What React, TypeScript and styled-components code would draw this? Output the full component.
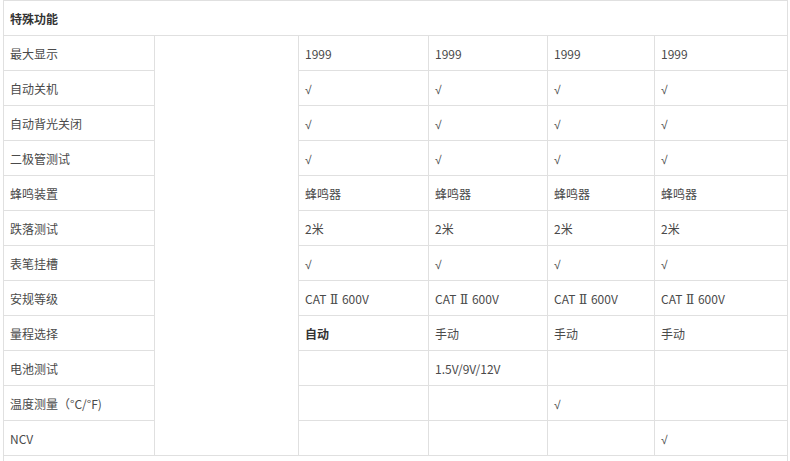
import React from "react";
import styled, { createGlobalStyle } from "styled-components";

const Global = createGlobalStyle`
  html, body { margin: 0; padding: 0; background: #fff; }
  body { font-family: "Noto Sans CJK SC", "Noto Sans", sans-serif; overflow: hidden; }
`;

const Page = styled.div`
  padding: 0 3px;
`;

const Table = styled.table`
  width: 784px;
  border-collapse: collapse;
  table-layout: fixed;
  font-size: 12px;
  color: #4a4a4a;
`;

const Cell = styled.td<{ $bold?: boolean }>`
  border: 1px solid #e0e0e0;
  height: 34px;
  padding: 0 0 0 6px;
  vertical-align: middle;
  font-weight: ${(p) => (p.$bold ? 700 : 400)};
  color: ${(p) => (p.$bold ? "#333" : "#4a4a4a")};
  white-space: nowrap;
`;

const Check = styled.span`
  font-family: "Liberation Sans", sans-serif;
  font-size: 12px;
`;

const Roman = styled.span`
  font-family: "DejaVu Serif", serif;
  font-size: 12px;
  margin: 0 1px;
`;

const EdgeCell = styled.td`
  border: 1px solid #e0e0e0;
  border-top: none;
  height: 0;
  padding: 0;
  font-size: 0;
  line-height: 0;
`;

const SectionCell = styled.td`
  border: 1px solid #e0e0e0;
  height: 34px;
  padding: 0 0 0 6px;
  font-weight: 700;
  color: #333;
`;

const widths = [151, 144, 130, 119, 107, 133];

type Row = { label: string; values: string[]; bold?: number[] };

const rows: Row[] = [
  { label: "最大显示", values: ["1999", "1999", "1999", "1999"] },
  { label: "自动关机", values: ["√", "√", "√", "√"] },
  { label: "自动背光关闭", values: ["√", "√", "√", "√"] },
  { label: "二极管测试", values: ["√", "√", "√", "√"] },
  { label: "蜂鸣装置", values: ["蜂鸣器", "蜂鸣器", "蜂鸣器", "蜂鸣器"] },
  { label: "跌落测试", values: ["2米", "2米", "2米", "2米"] },
  { label: "表笔挂槽", values: ["√", "√", "√", "√"] },
  { label: "安规等级", values: ["CAT Ⅱ 600V", "CAT Ⅱ 600V", "CAT Ⅱ 600V", "CAT Ⅱ 600V"] },
  { label: "量程选择", values: ["自动", "手动", "手动", "手动"], bold: [0] },
  { label: "电池测试", values: ["", "1.5V/9V/12V", "", ""] },
  { label: "温度测量（°C/°F)", values: ["", "", "√", ""] },
  { label: "NCV", values: ["", "", "", "√"] },
];

function renderValue(v: string) {
  if (v === "√") return <Check>√</Check>;
  if (v.includes("Ⅱ")) {
    const [a, b] = v.split("Ⅱ");
    return (
      <>
        {a}
        <Roman>Ⅱ</Roman>
        {b}
      </>
    );
  }
  return v;
}

export default function App() {
  return (
    <Page>
      <Global />
      <Table>
        <colgroup>
          {widths.map((w, i) => (
            <col key={i} style={{ width: w }} />
          ))}
        </colgroup>
        <tbody>
          <tr>
            {widths.map((_, i) => (
              <EdgeCell key={i} />
            ))}
          </tr>
          <tr>
            <SectionCell colSpan={6}>特殊功能</SectionCell>
          </tr>
          {rows.map((r, i) => (
            <tr key={r.label}>
              <Cell>{r.label}</Cell>
              {i === 0 && <Cell rowSpan={rows.length} />}
              {r.values.map((v, j) => (
                <Cell key={j} $bold={r.bold?.includes(j)}>
                  {renderValue(v)}
                </Cell>
              ))}
            </tr>
          ))}
          <tr>
            <SectionCell colSpan={6}>&nbsp;</SectionCell>
          </tr>
        </tbody>
      </Table>
    </Page>
  );
}
